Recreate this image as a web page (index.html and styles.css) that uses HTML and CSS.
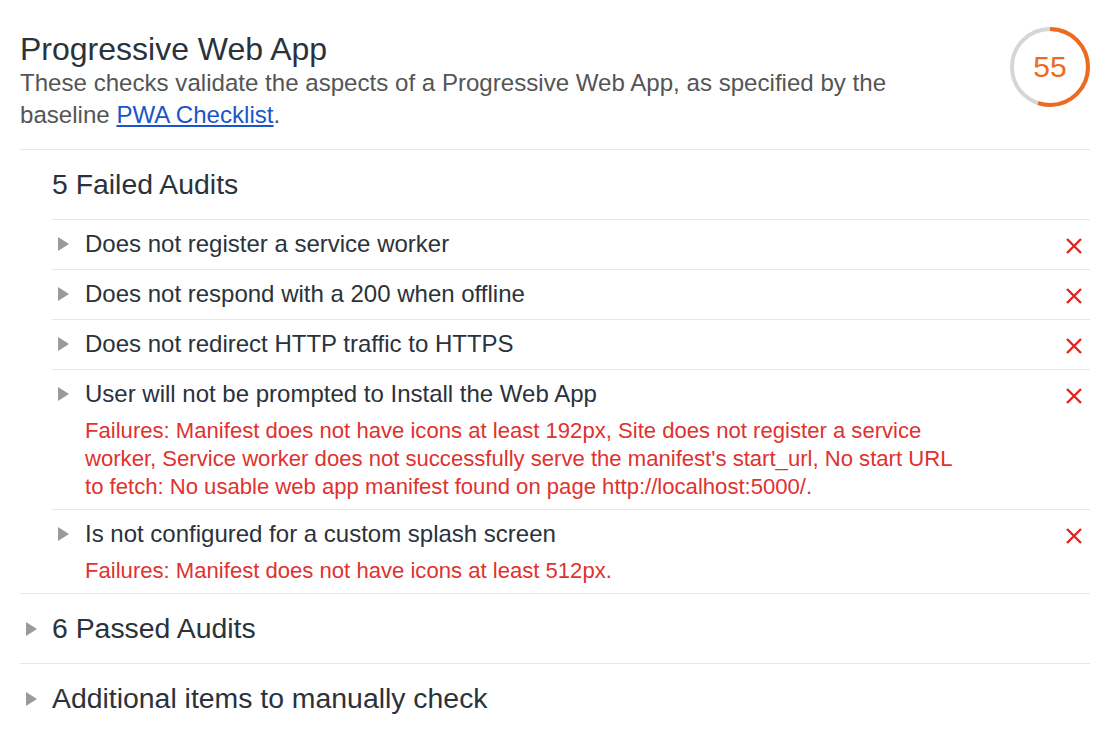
FILE: index.html
```html
<!DOCTYPE html>
<html lang="en">
<head>
<meta charset="utf-8">
<title>Progressive Web App</title>
<link rel="stylesheet" href="styles.css">
</head>
<body>
<div class="report">
  <header class="cat-header">
    <div class="cat-info">
      <h1 class="cat-title">Progressive Web App</h1>
      <p class="cat-desc">These checks validate the aspects of a Progressive Web App, as specified by the baseline <a href="#" class="link">PWA Checklist</a>.</p>
    </div>
    <div class="gauge">
      <svg class="gauge-svg" width="80" height="80" viewBox="0 0 80 80">
        <circle cx="40" cy="40" r="38" fill="none" stroke="#d6d6d6" stroke-width="4"/>
        <circle cx="40" cy="40" r="38" fill="none" stroke="#ee6a1e" stroke-width="4" stroke-dasharray="131.3 300" transform="rotate(-90 40 40)"/>
      </svg>
      <span class="gauge-score">55</span>
    </div>
  </header>

  <section class="group">
    <div class="group-header group-header-open">
      <span class="group-title">5 Failed Audits</span>
    </div>
    <div class="audits">
      <div class="audit">
        <span class="arrow"></span>
        <div class="audit-body">
          <div class="audit-title">Does not register a service worker</div>
        </div>
        <svg class="fail-icon" width="18" height="18" viewBox="0 0 18 18"><path d="M2 2L16 16M16 2L2 16" stroke="#e8211c" stroke-width="2.4" fill="none"/></svg>
      </div>
      <div class="audit">
        <span class="arrow"></span>
        <div class="audit-body">
          <div class="audit-title">Does not respond with a 200 when offline</div>
        </div>
        <svg class="fail-icon" width="18" height="18" viewBox="0 0 18 18"><path d="M2 2L16 16M16 2L2 16" stroke="#e8211c" stroke-width="2.4" fill="none"/></svg>
      </div>
      <div class="audit">
        <span class="arrow"></span>
        <div class="audit-body">
          <div class="audit-title">Does not redirect HTTP traffic to HTTPS</div>
        </div>
        <svg class="fail-icon" width="18" height="18" viewBox="0 0 18 18"><path d="M2 2L16 16M16 2L2 16" stroke="#e8211c" stroke-width="2.4" fill="none"/></svg>
      </div>
      <div class="audit audit-with-detail">
        <span class="arrow"></span>
        <div class="audit-body">
          <div class="audit-title">User will not be prompted to Install the Web App</div>
          <div class="audit-fail">Failures: Manifest does not have icons at least 192px, Site does not register a service worker, Service worker does not successfully serve the manifest's start_url, No start URL to fetch: No usable web app manifest found on page http://localhost:5000/.</div>
        </div>
        <svg class="fail-icon" width="18" height="18" viewBox="0 0 18 18"><path d="M2 2L16 16M16 2L2 16" stroke="#e8211c" stroke-width="2.4" fill="none"/></svg>
      </div>
      <div class="audit audit-with-detail">
        <span class="arrow"></span>
        <div class="audit-body">
          <div class="audit-title">Is not configured for a custom splash screen</div>
          <div class="audit-fail">Failures: Manifest does not have icons at least 512px.</div>
        </div>
        <svg class="fail-icon" width="18" height="18" viewBox="0 0 18 18"><path d="M2 2L16 16M16 2L2 16" stroke="#e8211c" stroke-width="2.4" fill="none"/></svg>
      </div>
    </div>
  </section>

  <section class="group">
    <div class="group-header">
      <span class="arrow"></span>
      <span class="group-title">6 Passed Audits</span>
    </div>
  </section>

  <section class="group group-last">
    <div class="group-header">
      <span class="arrow"></span>
      <span class="group-title">Additional items to manually check</span>
    </div>
  </section>
</div>
</body>
</html>
```

FILE: styles.css
```css
html, body {
  margin: 0;
  padding: 0;
  background: #ffffff;
}

body {
  font-family: "Liberation Sans", Arial, Helvetica, sans-serif;
  color: #2a323c;
}

.report {
  padding: 27px 26px 0 20px;
}

.cat-header {
  display: flex;
  align-items: flex-start;
  justify-content: space-between;
  padding-bottom: 18px;
  border-bottom: 1px solid #e6e6e6;
}

.cat-info {
  flex: 1;
}

.cat-title {
  margin: 4px 0 0 0;
  font-size: 32px;
  line-height: 36px;
  font-weight: normal;
  color: #2a323c;
}

.cat-desc {
  margin: 0;
  max-width: 920px;
  font-size: 24.1px;
  line-height: 32px;
  color: #555555;
}

.link {
  color: #1a56c8;
  text-decoration: underline;
}

.gauge {
  display: grid;
  width: 80px;
  height: 80px;
  flex: none;
}

.gauge-svg,
.gauge-score {
  grid-area: 1 / 1;
}

.gauge-score {
  display: flex;
  align-items: center;
  justify-content: center;
  font-size: 30px;
  color: #ee6a1e;
}

.group {
  border-bottom: 1px solid #e6e6e6;
}

.group-last {
  border-bottom: none;
}

.group-header {
  display: flex;
  align-items: center;
  height: 69px;
  padding-left: 6px;
  gap: 15px;
}

.group-header-open {
  padding-left: 32px;
}

.group-title {
  font-size: 28.4px;
  color: #2a323c;
}

.arrow {
  flex: none;
  width: 0;
  height: 0;
  border-left: 11px solid #9a9a9a;
  border-top: 7px solid transparent;
  border-bottom: 7px solid transparent;
}

.audits {
  margin-left: 32px;
  border-top: 1px solid #e6e6e6;
}

.audit {
  display: flex;
  align-items: flex-start;
  padding: 11px 7px 12px 6px;
  border-bottom: 1px solid #e6e6e6;
}

.audit:last-child {
  border-bottom: none;
}

.audit .arrow {
  margin-top: 6px;
}

.audit-body {
  flex: 1;
  margin-left: 16px;
}

.audit-title {
  font-size: 24px;
  line-height: 26px;
  color: #2a323c;
}

.audit-fail {
  margin: 10px 0 -4px 0;
  max-width: 884px;
  font-size: 22.1px;
  line-height: 28px;
  color: #e0322f;
}

.fail-icon {
  flex: none;
  margin-top: 6px;
}
```
